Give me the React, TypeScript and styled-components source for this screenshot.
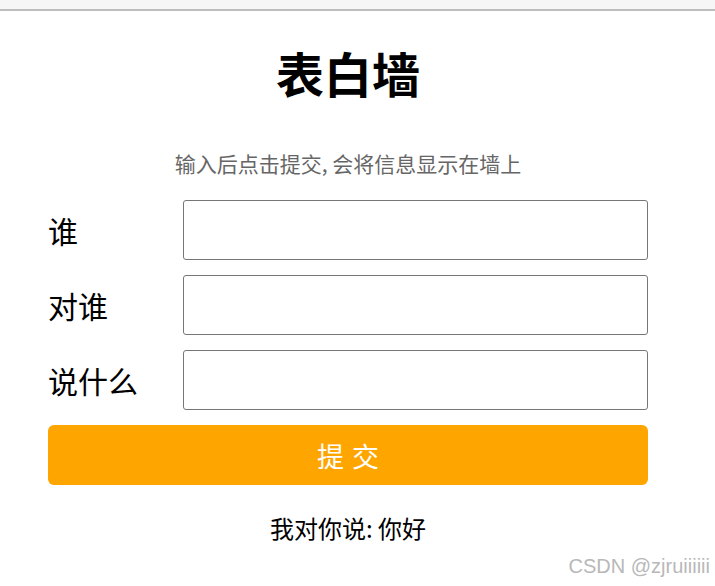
import React, {useState} from "react";
import styled, {createGlobalStyle} from "styled-components";

const GlobalStyle = createGlobalStyle`
  html, body {
    margin: 0;
    padding: 0;
    background: #fff;
  }
  body {
    font-family: "Microsoft YaHei", "Noto Sans CJK SC", "Liberation Sans", sans-serif;
  }
`;

const Page = styled.div`
  position: relative;
  width: 715px;
  height: 586px;
  overflow: hidden;
`;

const BrowserBar = styled.div`
  height: 9px;
  background: #f6f6f6;
  border-bottom: 2px solid #bdbdbd;
`;

const Wall = styled.div`
  width: 600px;
  margin-left: 48px;
  display: flex;
  flex-direction: column;
`;

const Title = styled.h1`
  margin: 31px 0 0;
  font-size: 48px;
  line-height: 60px;
  font-weight: 700;
  text-align: center;
  color: #000;
`;

const Hint = styled.p`
  margin: 47px 0 0;
  font-size: 21px;
  line-height: 28px;
  color: #666;
  text-align: center;
`;

const Row = styled.div`
  display: flex;
  align-items: center;
  height: 60px;
  margin-top: 15px;

  &:first-of-type {
    margin-top: 23px;
  }
`;

const Label = styled.span`
  width: 135px;
  font-size: 30px;
  color: #000;
`;

const Field = styled.input`
  box-sizing: border-box;
  width: 465px;
  height: 60px;
  border: 1px solid #767676;
  border-radius: 3px;
  font-size: 20px;
  padding: 0 10px;
  outline: none;
`;

const Submit = styled.button`
  margin-top: 15px;
  height: 60px;
  width: 600px;
  border: none;
  border-radius: 6px;
  background: #ffa500;
  color: #fff;
  font-family: inherit;
  font-size: 27px;
  letter-spacing: 8px;
  text-indent: 8px;
  cursor: pointer;
`;

const Message = styled.div`
  margin-top: 26px;
  font-size: 24px;
  line-height: 34px;
  text-align: center;
  color: #000;
`;

const Watermark = styled.div`
  position: absolute;
  right: 5px;
  bottom: 8px;
  font-family: "Liberation Sans", Arial, sans-serif;
  font-size: 20px;
  color: #b8b8b8;
`;

const fields = ["谁", "对谁", "说什么"];

export default function App() {
  const [values, setValues] = useState(["", "", ""]);

  return (
    <Page>
      <GlobalStyle/>
      <BrowserBar/>
      <Wall>
        <Title>表白墙</Title>
        <Hint>输入后点击提交, 会将信息显示在墙上</Hint>
        {fields.map((label, i) => (
          <Row key={label}>
            <Label>{label}</Label>
            <Field
              value={values[i]}
              onChange={e => {
                const next = [...values];
                next[i] = e.target.value;
                setValues(next);
              }}
            />
          </Row>
        ))}
        <Submit>提交</Submit>
        <Message>我对你说: 你好</Message>
      </Wall>
      <Watermark>CSDN @zjruiiiiii</Watermark>
    </Page>
  );
}
